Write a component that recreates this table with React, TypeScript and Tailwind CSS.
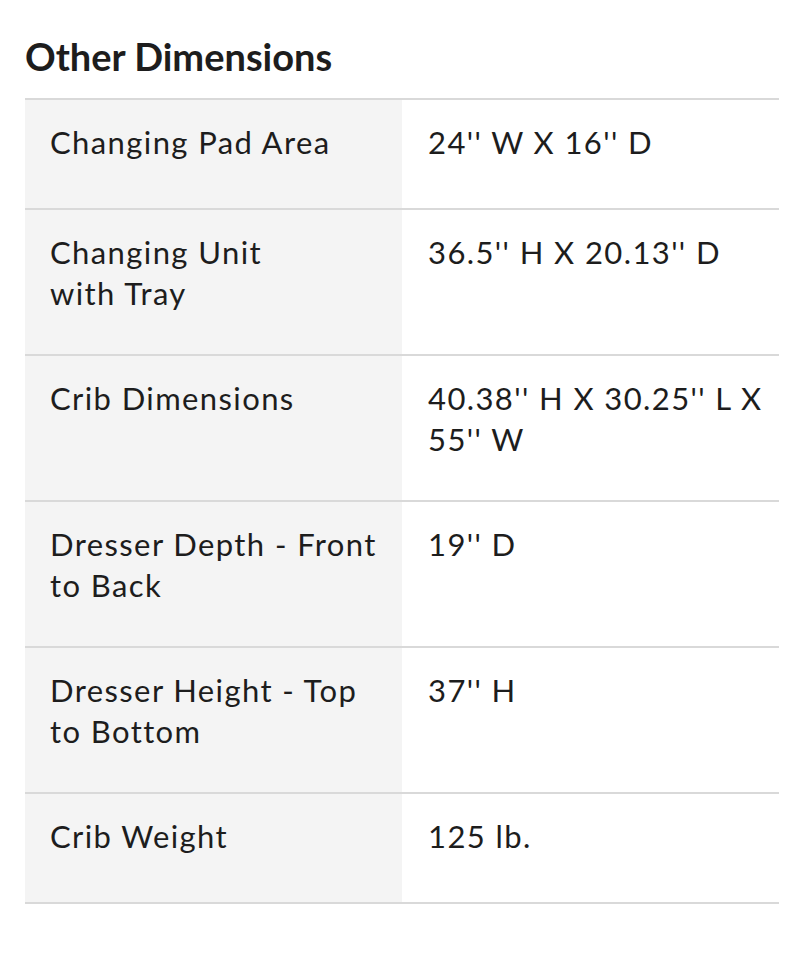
const rows: { label: string; value: string }[] = [
  { label: "Changing Pad Area", value: "24'' W X 16'' D" },
  { label: "Changing Unit\nwith Tray", value: "36.5'' H X 20.13'' D" },
  { label: "Crib Dimensions", value: "40.38'' H X 30.25'' L X 55'' W" },
  { label: "Dresser Depth - Front to Back", value: "19'' D" },
  { label: "Dresser Height - Top to Bottom", value: "37'' H" },
  { label: "Crib Weight", value: "125 lb." },
];

export default function App() {
  return (
    <div className="min-h-screen bg-white px-[25px] pt-[33px] font-['Lato',sans-serif] text-[#1d1d1d]">
      {/* Heading */}
      <h2 className="text-[38px] font-bold leading-[46px] mb-[19px]">Other Dimensions</h2>

      {/* Table */}
      <div className="border-t-2 border-[#d9d9d9]">
        {rows.map((row) => (
          <div key={row.label} className="grid grid-cols-2 border-b-2 border-[#d9d9d9] min-h-[110px]">
            <div className="bg-[#f4f4f4] pl-[25px] pr-[4px] pt-[22px] pb-[40px] text-[31px] leading-[41px] tracking-[1.4px] whitespace-pre-line">
              {row.label}
            </div>
            <div className="pl-[26px] pr-[10px] pt-[22px] pb-[40px] text-[31px] leading-[41px] tracking-[1.4px]">
              {row.value}
            </div>
          </div>
        ))}
      </div>
    </div>
  );
}
